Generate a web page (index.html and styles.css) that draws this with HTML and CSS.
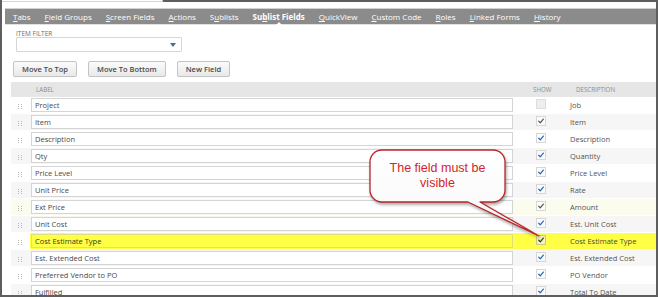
FILE: index.html
```html
<!DOCTYPE html>
<html>
<head>
<meta charset="utf-8">
<link rel="stylesheet" href="styles.css">
</head>
<body>
<div class="frame">
  <div class="topstrip"><div class="notch"></div></div>
  <nav class="tabbar">
    <span class="tab"><u>T</u>abs</span>
    <span class="tab"><u>F</u>ield Groups</span>
    <span class="tab"><u>S</u>creen Fields</span>
    <span class="tab"><u>A</u>ctions</span>
    <span class="tab">S<u>u</u>blists</span>
    <span class="tab active">Su<u>b</u>list Fields</span>
    <span class="tab"><u>Q</u>uickView</span>
    <span class="tab"><u>C</u>ustom Code</span>
    <span class="tab"><u>R</u>oles</span>
    <span class="tab"><u>L</u>inked Forms</span>
    <span class="tab"><u>H</u>istory</span>
  </nav>

  <div class="filter">
    <div class="filter-label">ITEM FILTER</div>
    <div class="select"><span class="arrow"></span></div>
  </div>

  <div class="buttons">
    <button class="btn">Move To Top</button>
    <button class="btn">Move To Bottom</button>
    <button class="btn">New Field</button>
  </div>

  <div class="table">
    <div class="thead">
      <span class="th-grip"></span>
      <span class="th-label">LABEL</span>
      <span class="th-show">SHOW</span>
      <span class="th-desc">DESCRIPTION</span>
    </div>

    <div class="row">
      <span class="grip"></span><span class="field">Project</span>
      <span class="cbcell"><span class="cb off"></span></span><span class="desc">Job</span>
    </div>
    <div class="row alt">
      <span class="grip"></span><span class="field">Item</span>
      <span class="cbcell"><span class="cb gray"><svg viewBox="0 0 10 10"><path d="M2.2 5.3 L4.1 7.3 L7.9 2.6"/></svg></span></span><span class="desc">Item</span>
    </div>
    <div class="row">
      <span class="grip"></span><span class="field">Description</span>
      <span class="cbcell"><span class="cb"><svg viewBox="0 0 10 10"><path d="M2.2 5.3 L4.1 7.3 L7.9 2.6"/></svg></span></span><span class="desc">Description</span>
    </div>
    <div class="row alt">
      <span class="grip"></span><span class="field">Qty</span>
      <span class="cbcell"><span class="cb"><svg viewBox="0 0 10 10"><path d="M2.2 5.3 L4.1 7.3 L7.9 2.6"/></svg></span></span><span class="desc">Quantity</span>
    </div>
    <div class="row">
      <span class="grip"></span><span class="field">Price Level</span>
      <span class="cbcell"><span class="cb"><svg viewBox="0 0 10 10"><path d="M2.2 5.3 L4.1 7.3 L7.9 2.6"/></svg></span></span><span class="desc">Price Level</span>
    </div>
    <div class="row alt">
      <span class="grip"></span><span class="field">Unit Price</span>
      <span class="cbcell"><span class="cb"><svg viewBox="0 0 10 10"><path d="M2.2 5.3 L4.1 7.3 L7.9 2.6"/></svg></span></span><span class="desc">Rate</span>
    </div>
    <div class="row hover">
      <span class="grip"></span><span class="field">Ext Price</span>
      <span class="cbcell"><span class="cb gray"><svg viewBox="0 0 10 10"><path d="M2.2 5.3 L4.1 7.3 L7.9 2.6"/></svg></span></span><span class="desc">Amount</span>
    </div>
    <div class="row alt">
      <span class="grip"></span><span class="field">Unit Cost</span>
      <span class="cbcell"><span class="cb"><svg viewBox="0 0 10 10"><path d="M2.2 5.3 L4.1 7.3 L7.9 2.6"/></svg></span></span><span class="desc">Est. Unit Cost</span>
    </div>
    <div class="row mark">
      <span class="grip"></span>
      <span class="markzone">
        <span class="field">Cost Estimate Type</span>
        <span class="cbcell"><span class="cb dark"><svg viewBox="0 0 10 10"><path d="M2.2 5.3 L4.1 7.3 L7.9 2.6"/></svg></span></span><span class="desc">Cost Estimate Type</span>
      </span>
    </div>
    <div class="row alt">
      <span class="grip"></span><span class="field">Est. Extended Cost</span>
      <span class="cbcell"><span class="cb"><svg viewBox="0 0 10 10"><path d="M2.2 5.3 L4.1 7.3 L7.9 2.6"/></svg></span></span><span class="desc">Est. Extended Cost</span>
    </div>
    <div class="row">
      <span class="grip"></span><span class="field">Preferred Vendor to PO</span>
      <span class="cbcell"><span class="cb"><svg viewBox="0 0 10 10"><path d="M2.2 5.3 L4.1 7.3 L7.9 2.6"/></svg></span></span><span class="desc">PO Vendor</span>
    </div>
    <div class="row alt">
      <span class="grip"></span><span class="field">Fulfilled</span>
      <span class="cbcell"><span class="cb"><svg viewBox="0 0 10 10"><path d="M2.2 5.3 L4.1 7.3 L7.9 2.6"/></svg></span></span><span class="desc">Total To Date</span>
    </div>
  </div>

  <svg class="callout-shape" width="190" height="105" viewBox="0 0 190 105">
    <defs>
      <linearGradient id="bub" x1="0" y1="0" x2="0" y2="1">
        <stop offset="0" stop-color="#ffffff"/>
        <stop offset="0.6" stop-color="#fbfbfb"/>
        <stop offset="1" stop-color="#ececec"/>
      </linearGradient>
    </defs>
    <path d="M22 10 H133 A12 12 0 0 1 145 22 V50 A12 12 0 0 1 133 62 H120 L179 96 L108 62 H22 A12 12 0 0 1 10 50 V22 A12 12 0 0 1 22 10 Z" fill="url(#bub)" stroke="#b9262c" stroke-width="1.3" stroke-linejoin="round"/>
  </svg>
  <div class="callout-text">The field must be<br>visible</div>
</div>
</body>
</html>
```

FILE: styles.css
```css
* { box-sizing: border-box; }

html, body {
  margin: 0;
  padding: 0;
  background: #ffffff;
}

body {
  font-family: "Open Sans", "DejaVu Sans", sans-serif;
}

.frame {
  position: relative;
  width: 658px;
  height: 297px;
  border: 2px solid #5e5e5e;
  border-top: 0;
  overflow: hidden;
  background: #ffffff;
}

.topstrip {
  height: 2px;
  background: #5e5e5e;
}

.notch {
  width: 161px;
  height: 2px;
  background: #ffffff;
  border-right: 1px solid #c4c4c4;
  border-bottom: 1px solid #d4d4d4;
}

/* tab bar */
.tabbar {
  position: relative;
  display: flex;
  align-items: center;
  gap: 14px;
  height: 17px;
  margin: 6px 0 0 3px;
  padding-left: 8px;
  background: #8b8b8b;
  border-top: 1px solid #d2d2d2;
  border-bottom: 1px solid #e2e2e2;
}

.tab {
  position: relative;
  font-size: 8px;
  line-height: 15px;
  color: #ffffff;
  white-space: nowrap;
}

.tab u {
  text-decoration-thickness: 1px;
  text-underline-offset: 1px;
}

.tab.active {
  font-weight: 700;
}

.tab.active::after {
  content: "";
  position: absolute;
  left: 50%;
  bottom: -1px;
  margin-left: -3px;
  border-left: 3px solid transparent;
  border-right: 3px solid transparent;
  border-bottom: 3px solid #ffffff;
}

/* filter */
.filter {
  margin: 5px 0 0 14px;
}

.filter-label {
  font-size: 6.5px;
  line-height: 7px;
  color: #6c6c6c;
}

.select {
  display: flex;
  justify-content: flex-end;
  align-items: center;
  width: 166px;
  height: 15px;
  padding-right: 5px;
  border: 1px solid #d6d6d6;
  border-radius: 1px;
  background: #ffffff;
}

.arrow {
  width: 0;
  height: 0;
  border-left: 3px solid transparent;
  border-right: 3px solid transparent;
  border-top: 4px solid #4f6a84;
}

/* buttons */
.buttons {
  display: flex;
  gap: 11px;
  margin: 9px 0 0 11px;
}

.btn {
  height: 16px;
  padding: 0 8px;
  margin: 0;
  font-family: "Open Sans", "DejaVu Sans", sans-serif;
  font-size: 7.5px;
  font-weight: 600;
  color: #4a4a4a;
  background: linear-gradient(#fbfbfb, #e9e9e9);
  border: 1px solid #c3c3c3;
  border-radius: 2px;
}

/* table */
.table {
  margin: 5px 0 0 9px;
}

.thead {
  display: flex;
  align-items: center;
  height: 15px;
  background: #e6e6e6;
  font-size: 6.2px;
  color: #8c8c8c;
}

.th-grip { width: 20px; }
.th-label { width: 482px; padding-left: 5px; }
.th-show { width: 57px; padding-left: 20px; }
.th-desc { padding-left: 6px; }

.row {
  display: flex;
  align-items: center;
  height: 17px;
  background: #ffffff;
  border-bottom: 1px solid #ffffff;
}

.row.alt { background: #f6f6f6; }
.row.hover { background: #fbfbee; }

.grip {
  width: 20px;
  height: 17px;
  padding: 7px 0 0 7px;
}

.grip::before {
  content: "";
  display: block;
  width: 1px;
  height: 1px;
  background: #b8b8b8;
  box-shadow: 3px 0 #b8b8b8, 0 2px #b8b8b8, 3px 2px #b8b8b8, 0 4px #b8b8b8, 3px 4px #b8b8b8;
}

.field {
  width: 482px;
  height: 14.5px;
  padding-left: 3px;
  border: 1px solid #d4d4d4;
  background: #ffffff;
  font-size: 7.5px;
  line-height: 12.5px;
  color: #484848;
  white-space: nowrap;
}

.cbcell {
  width: 57px;
  height: 17px;
  padding: 2px 0 0 23px;
}

.cb {
  display: block;
  width: 10px;
  height: 10px;
  border: 1px solid #d6d6d6;
  background: #fbfbfb;
}

.cb svg {
  display: block;
  width: 8px;
  height: 8px;
}

.cb path {
  fill: none;
  stroke: #2f66c0;
  stroke-width: 1.6;
  stroke-linecap: round;
  stroke-linejoin: round;
}

.cb.off {
  background: #eeeeee;
  border-color: #dddddd;
}

.cb.gray path { stroke: #5a5a5a; }
.cb.dark path { stroke: #2f4a12; }
.cb.dark { background: #f2f2c0; border-color: #c9c98a; }

.desc {
  flex: 1;
  font-size: 7.5px;
  color: #545454;
  white-space: nowrap;
}

/* highlighted row */
.markzone {
  display: flex;
  align-items: center;
  flex: 1;
  height: 16px;
  margin-left: -1px;
  padding-left: 1px;
  background: #ffff45;
}

.row.mark .field {
  background: #ffff45;
  border-color: #e0e07a;
  color: #3a3a20;
}

.row.mark .desc { color: #4a4a30; }

/* callout */
.callout-shape {
  position: absolute;
  left: 358px;
  top: 140px;
  filter: drop-shadow(1px 2px 1.5px rgba(0, 0, 0, 0.35));
}

.callout-text {
  position: absolute;
  left: 368px;
  top: 150px;
  width: 135px;
  height: 52px;
  display: flex;
  align-items: center;
  justify-content: center;
  text-align: center;
  font-family: "Liberation Sans", Arial, sans-serif;
  font-size: 12.5px;
  line-height: 15px;
  color: #d3242b;
}
```
